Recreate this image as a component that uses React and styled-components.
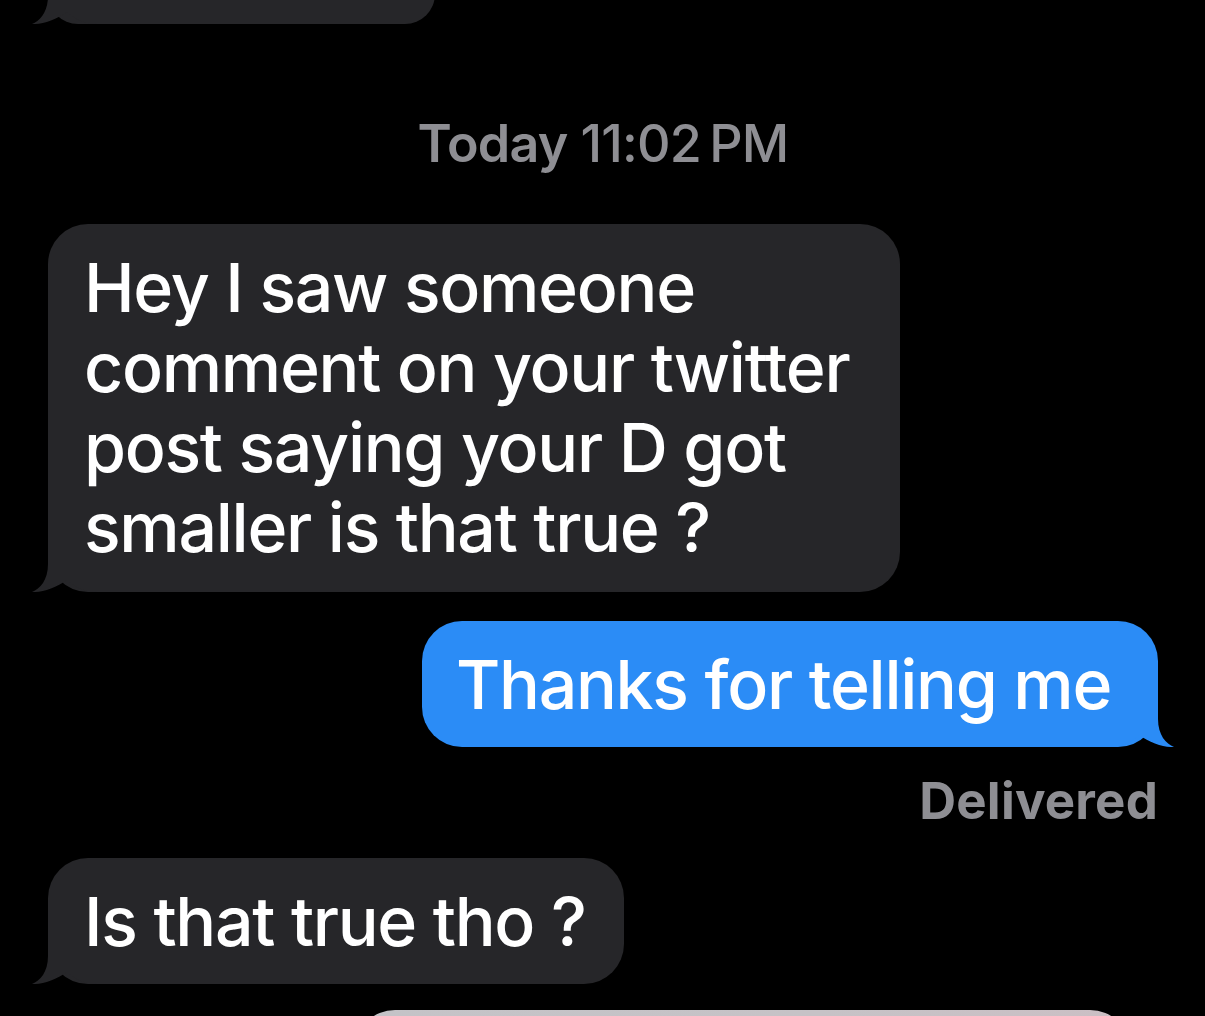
import React from "react";
import styled, { createGlobalStyle } from "styled-components";

const GlobalStyle = createGlobalStyle`
  html, body {
    margin: 0;
    padding: 0;
    background: #000;
  }
  body {
    font-family: Inter, "Noto Sans", sans-serif;
    -webkit-font-smoothing: antialiased;
  }
`;

const Tail = ({ out }) => (
  <TailSvg $out={out} viewBox="0 0 70 50" width="70" height="50">
    <path
      d="M16 0 L16 22 C16 38 8 47 0 50 C10 50.5 24 46 35 38 C44 46 52 50 66 50 L70 50 L70 0 Z"
      fill="currentColor"
    />
  </TailSvg>
);

const App = () => {
  return (
    <>
      <GlobalStyle />
      <Screen>
        <Bubble $w={387} $h={60} $mt={-36}>
          <Tail />
        </Bubble>

        <Stamp>
          <b>Today</b> 11:02{"\u202F"}PM
        </Stamp>

        <Bubble $w={852} $mt={49} $pb={25}>
          Hey I saw someone
          <br />
          comment on your twitter
          <br />
          post saying your D got
          <br />
          smaller is that true ?
          <Tail />
        </Bubble>

        <Bubble $out $w={736} $mt={29}>
          Thanks for telling me
          <Tail out />
        </Bubble>

        <Status>Delivered</Status>

        <Bubble $w={576} $mt={27}>
          Is that true tho ?
          <Tail />
        </Bubble>

        <Preview />
      </Screen>
    </>
  );
};

const Screen = styled.div`
  width: 1205px;
  height: 1016px;
  overflow: hidden;
  background: #000;
  display: flex;
  flex-direction: column;
  padding: 0 47px 0 48px;
  box-sizing: border-box;
`;

const Bubble = styled.div`
  position: relative;
  isolation: isolate;
  flex-shrink: 0;
  align-self: ${(p) => (p.$out ? "flex-end" : "flex-start")};
  width: ${(p) => p.$w}px;
  height: ${(p) => (p.$h ? `${p.$h}px` : "auto")};
  margin-top: ${(p) => p.$mt}px;
  box-sizing: border-box;
  padding: 23px 30px ${(p) => p.$pb || 23}px ${(p) => (p.$out ? 34 : 36)}px;
  border-radius: 40px;
  background: ${(p) => (p.$out ? "#2b8cf6" : "#262629")};
  color: #fff;
  font-size: 68px;
  line-height: 80px;
  font-weight: 500;
  letter-spacing: -1.3px;
  white-space: nowrap;
`;

const TailSvg = styled.svg`
  position: absolute;
  z-index: -1;
  bottom: 0;
  ${(p) => (p.$out ? "right: -16px;" : "left: -16px;")}
  transform: ${(p) => (p.$out ? "scaleX(-1)" : "none")};
  color: ${(p) => (p.$out ? "#2b8cf6" : "#262629")};
  display: block;
`;

const Stamp = styled.div`
  flex-shrink: 0;
  margin-top: 89px;
  text-align: center;
  font-size: 52px;
  line-height: 62px;
  color: #8e8e93;
  font-weight: 500;
  letter-spacing: -0.8px;

  b {
    font-weight: 600;
  }
`;

const Status = styled.div`
  flex-shrink: 0;
  align-self: flex-end;
  margin-top: 24px;
  font-size: 51px;
  line-height: 60px;
  font-weight: 700;
  letter-spacing: 0.2px;
  color: #8e8e93;
`;

const Preview = styled.div`
  flex-shrink: 0;
  align-self: flex-end;
  width: 775px;
  height: 200px;
  margin-top: 26px;
  margin-right: 28px;
  border-radius: 40px;
  background: linear-gradient(90deg, #c4c3c7 0%, #c6c2c6 60%, #cbbfc4 100%);
`;

export default App;
